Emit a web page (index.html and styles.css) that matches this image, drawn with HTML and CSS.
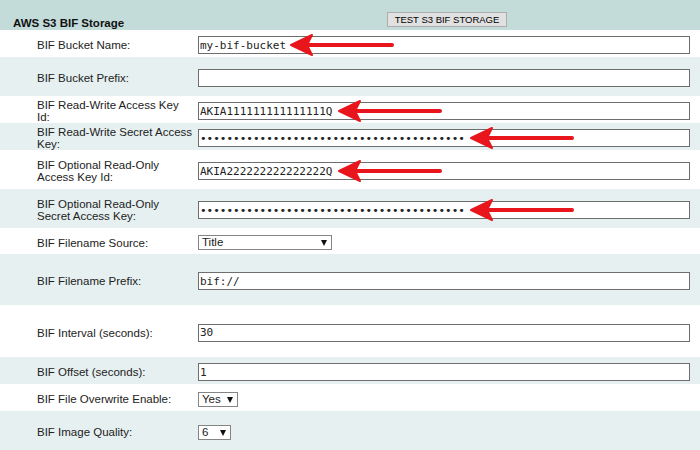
FILE: index.html
```html
<html>
<head>
  <title>AWS S3 BIF Storage</title>
  <link rel="stylesheet" href="styles.css">
</head>
<body>
  <section id="bifStorage">
    <!-- section header -->
    <div class="section-head">
      <h2>AWS S3 BIF Storage</h2>
      <button type="button" class="test-btn">TEST S3 BIF STORAGE</button>
    </div>

    <div class="row h27">
      <div class="label">BIF Bucket Name:</div>
      <div class="field">
        <input type="text" class="text" value="my-bif-bucket">
        <svg class="arrow name" width="105" height="24" viewBox="0 0 105 24"><path d="M14 12 H102" stroke="#e8161c" stroke-width="4" stroke-linecap="round"/><path d="M1 12 L22 2 L17 12 L22 22 Z" fill="#e8161c" stroke="#e8161c" stroke-width="2" stroke-linejoin="round"/></svg>
      </div>
    </div>
    <div class="row alt h39">
      <div class="label">BIF Bucket Prefix:</div>
      <div class="field"><input type="text" class="text" value=""></div>
    </div>
    <div class="row h27">
      <div class="label">BIF Read-Write Access Key Id:</div>
      <div class="field">
        <input type="text" class="text" value="AKIA111111111111111Q">
        <svg class="arrow key" width="105" height="24" viewBox="0 0 105 24"><path d="M14 12 H102" stroke="#e8161c" stroke-width="4" stroke-linecap="round"/><path d="M1 12 L22 2 L17 12 L22 22 Z" fill="#e8161c" stroke="#e8161c" stroke-width="2" stroke-linejoin="round"/></svg>
      </div>
    </div>
    <div class="row alt h27">
      <div class="label">BIF Read-Write Secret Access Key:</div>
      <div class="field">
        <input type="password" class="text" value="xxxxxxxxxxxxxxxxxxxxxxxxxxxxxxxxxxxxxxxx">
        <svg class="arrow secret" width="105" height="24" viewBox="0 0 105 24"><path d="M14 12 H102" stroke="#e8161c" stroke-width="4" stroke-linecap="round"/><path d="M1 12 L22 2 L17 12 L22 22 Z" fill="#e8161c" stroke="#e8161c" stroke-width="2" stroke-linejoin="round"/></svg>
      </div>
    </div>
    <div class="row h39">
      <div class="label">BIF Optional Read-Only Access Key Id:</div>
      <div class="field">
        <input type="text" class="text" value="AKIA222222222222222Q">
        <svg class="arrow key" width="105" height="24" viewBox="0 0 105 24"><path d="M14 12 H102" stroke="#e8161c" stroke-width="4" stroke-linecap="round"/><path d="M1 12 L22 2 L17 12 L22 22 Z" fill="#e8161c" stroke="#e8161c" stroke-width="2" stroke-linejoin="round"/></svg>
      </div>
    </div>
    <div class="row alt h39">
      <div class="label">BIF Optional Read-Only Secret Access Key:</div>
      <div class="field">
        <input type="password" class="text" value="xxxxxxxxxxxxxxxxxxxxxxxxxxxxxxxxxxxxxxxx">
        <svg class="arrow secret" width="105" height="24" viewBox="0 0 105 24"><path d="M14 12 H102" stroke="#e8161c" stroke-width="4" stroke-linecap="round"/><path d="M1 12 L22 2 L17 12 L22 22 Z" fill="#e8161c" stroke="#e8161c" stroke-width="2" stroke-linejoin="round"/></svg>
      </div>
    </div>
    <div class="row h26">
      <div class="label">BIF Filename Source:</div>
      <div class="field">
        <span class="pick"><select class="w-title"><option>Title</option><option>Filename</option></select></span>
      </div>
    </div>
    <div class="row alt h51">
      <div class="label">BIF Filename Prefix:</div>
      <div class="field"><input type="text" class="text" value="bif://"></div>
    </div>
    <div class="row h52">
      <div class="label">BIF Interval (seconds):</div>
      <div class="field"><input type="text" class="text" value="30"></div>
    </div>
    <div class="row alt h27">
      <div class="label">BIF Offset (seconds):</div>
      <div class="field"><input type="text" class="text" value="1"></div>
    </div>
    <div class="row h27">
      <div class="label">BIF File Overwrite Enable:</div>
      <div class="field">
        <span class="pick"><select class="w-yes"><option>Yes</option><option>No</option></select></span>
      </div>
    </div>
    <div class="row alt h39">
      <div class="label">BIF Image Quality:</div>
      <div class="field">
        <span class="pick"><select class="w-num"><option>6</option><option>7</option><option>8</option></select></span>
      </div>
    </div>
  </section>
</body>
</html>
```

FILE: styles.css
```css
body {
  margin: 0;
  font: 11.5px "Liberation Sans", Arial, sans-serif;
  color: #222;
  background: #fff;
}
.section-head {
  display: grid;
  grid-template-columns: 198px 1fr;
  height: 30px;
  background: #c3dbd9;
}
.section-head h2 {
  margin: 0;
  align-self: end;
  padding-left: 13px;
  font-size: 11.5px;
  line-height: 14px;
  color: #111;
}
.test-btn {
  align-self: end;
  justify-self: start;
  margin: 0 0 3px 189px;
  width: 120px;
  height: 15px;
  padding: 0;
  border: 1px solid #adadad;
  border-radius: 0;
  background: #e1e1e1;
  font: 9.5px "Liberation Sans", Arial, sans-serif;
  color: #000;
}
.row {
  display: grid;
  grid-template-columns: 198px 1fr;
  align-items: center;
  box-sizing: border-box;
  padding-top: 3px;
}
.row.alt {
  background: #e6f0f0;
}
.h26 { height: 26px; }
.h27 { height: 27px; }
.h39 { height: 39px; }
.h51 { height: 51px; }
.h52 { height: 52px; }
.label {
  padding: 0 4px 0 37px;
  line-height: 12px;
  color: #222;
}
.field {
  position: relative;
  height: 18px;
  display: flex;
  align-items: center;
}
.text {
  box-sizing: border-box;
  width: 492px;
  height: 18px;
  margin: 0;
  padding: 0 1px;
  border: 1px solid #6e6e6e;
  border-radius: 0;
  background: #fff;
  font: 11px "DejaVu Sans Mono", monospace;
  color: #222;
  outline: none;
}
/* red pointer arrows laid over the inputs */
.arrow {
  position: absolute;
  top: 50%;
  margin-top: -12px;
}
.arrow.name { left: 92px; }
.arrow.key { left: 140px; }
.arrow.secret { left: 272px; }
.pick {
  position: relative;
  display: inline-block;
  height: 15px;
}
.pick select {
  -webkit-appearance: none;
  appearance: none;
  box-sizing: border-box;
  height: 15px;
  margin: 0;
  padding: 0 0 0 3px;
  border: 1px solid #858585;
  border-radius: 0;
  background: #fff;
  font: 11.5px "Liberation Sans", Arial, sans-serif;
  line-height: 13px;
  color: #222;
}
.pick::after {
  content: '';
  position: absolute;
  right: 5px;
  top: 5px;
  border-left: 3.5px solid transparent;
  border-right: 3.5px solid transparent;
  border-top: 6px solid #111;
  pointer-events: none;
}
.w-title { width: 134px; }
.w-yes { width: 40px; }
.w-num { width: 33px; }
```
